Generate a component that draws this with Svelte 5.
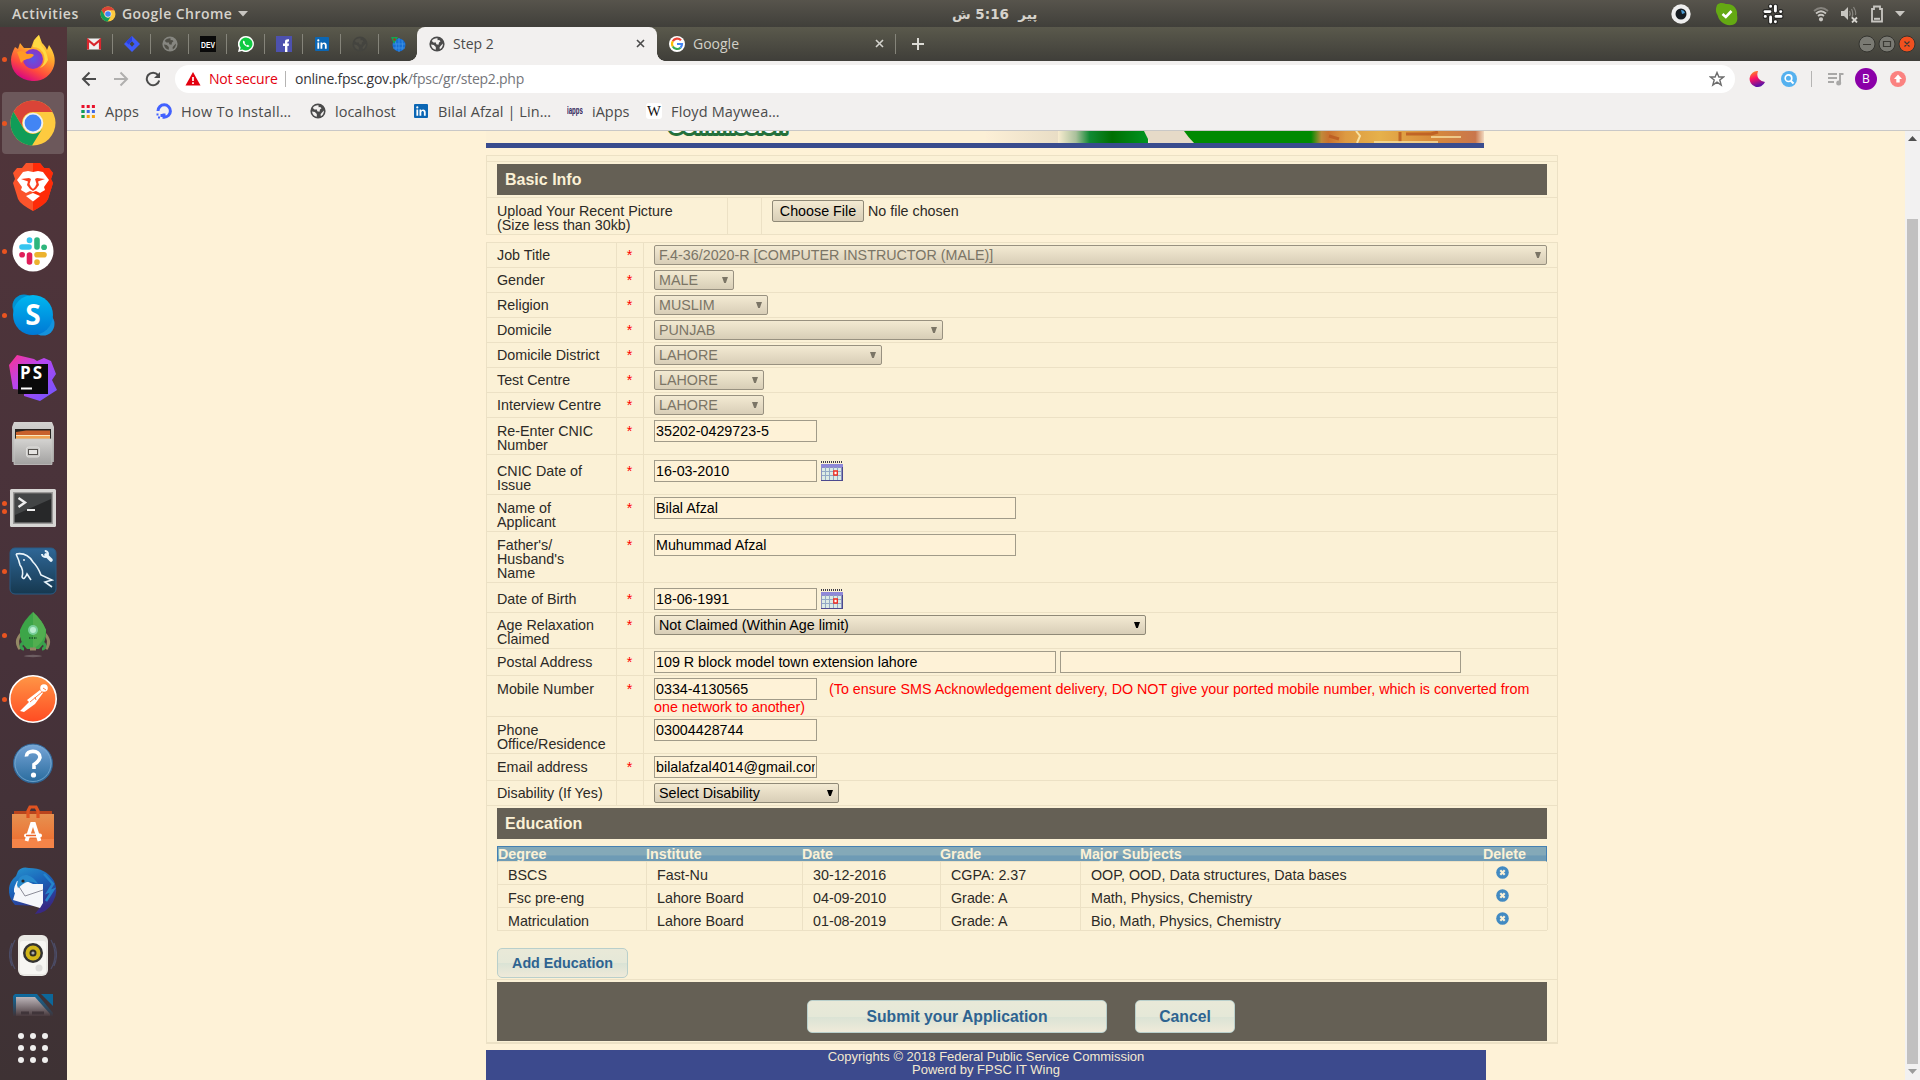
<script>
  const yes = true;
  const rows = [
    { label: ['Job Title'], req: yes, kind: 'select', value: 'F.4-36/2020-R [COMPUTER INSTRUCTOR (MALE)]', w: 893, off: true, h: 25 },
    { label: ['Gender'], req: yes, kind: 'select', value: 'MALE', w: 80, off: true, h: 25 },
    { label: ['Religion'], req: yes, kind: 'select', value: 'MUSLIM', w: 114, off: true, h: 25 },
    { label: ['Domicile'], req: yes, kind: 'select', value: 'PUNJAB', w: 289, off: true, h: 25 },
    { label: ['Domicile District'], req: yes, kind: 'select', value: 'LAHORE', w: 228, off: true, h: 25 },
    { label: ['Test Centre'], req: yes, kind: 'select', value: 'LAHORE', w: 110, off: true, h: 25 },
    { label: ['Interview Centre'], req: yes, kind: 'select', value: 'LAHORE', w: 110, off: true, h: 25 },
    { label: ['Re-Enter CNIC', 'Number'], req: yes, kind: 'input', value: '35202-0429723-5', w: 163, h: 37 },
    { label: ['CNIC Date of', 'Issue'], req: yes, kind: 'date', value: '16-03-2010', w: 163, h: 40 },
    { label: ['Name of', 'Applicant'], req: yes, kind: 'input', value: 'Bilal Afzal', w: 362, h: 37 },
    { label: ["Father's/", "Husband's", 'Name'], req: yes, kind: 'input', value: 'Muhummad Afzal', w: 362, h: 51 },
    { label: ['Date of Birth'], req: yes, kind: 'date', value: '18-06-1991', w: 163, h: 30 },
    { label: ['Age Relaxation', 'Claimed'], req: yes, kind: 'select', value: 'Not Claimed (Within Age limit)', w: 492, h: 36 },
    { label: ['Postal Address'], req: yes, kind: 'input', value: '109 R block model town extension lahore', w: 402, extra: 401, h: 27 },
    { label: ['Mobile Number'], req: yes, kind: 'input', value: '0334-4130565', w: 163, note: true, h: 41 },
    { label: ['Phone', 'Office/Residence'], req: false, kind: 'input', value: '03004428744', w: 163, h: 37 },
    { label: ['Email address'], req: yes, kind: 'input', value: 'bilalafzal4014@gmail.com', w: 163, h: 27 },
    { label: ['Disability (If Yes)'], req: false, kind: 'select', value: 'Select Disability', w: 185, h: 25 }
  ];
  const education = [
    ['BSCS', 'Fast-Nu', '30-12-2016', 'CGPA: 2.37', 'OOP, OOD, Data structures, Data bases'],
    ['Fsc pre-eng', 'Lahore Board', '04-09-2010', 'Grade: A', 'Math, Physics, Chemistry'],
    ['Matriculation', 'Lahore Board', '01-08-2019', 'Grade: A', 'Bio, Math, Physics, Chemistry']
  ];
  const dock = [
    ['firefox', 1], ['chrome', 1], ['brave', 0], ['slack', 1], ['skype', 1], ['phpstorm', 0], ['files', 0], ['terminal', 2],
    ['workbench', 1], ['rocket', 1], ['postman', 1], ['help', 0], ['software', 0], ['thunderbird', 0], ['rhythmbox', 0]
  ];
  const pinned = ['gmail', 'jira', 'globe', 'dev', 'whatsapp', 'facebook', 'linkedin', 'globedark', 'earth'];
</script>

{#snippet globe(color)}
  <svg width="16" height="16" viewBox="0 0 16 16"><circle cx="8" cy="8" r="7.6" fill={color} /><path d="M8.5 2.2C6 2 3.800 3 2.800 5L4.500 6.600H7L7.200 8.200L9.500 8.800L10 6.500L11.500 5.300L10.200 4L8.600 4.200zM2 8.500L4.800 9L6.800 11V13.800C4.500 13.500 2.300 11.500 2 8.500zM14 7.500C14 10.500 12.500 12.400 10.800 13.200L10.600 11.200L12 9.500z" fill="currentColor" /></svg>
{/snippet}

{#snippet linkedin()}
  <svg width="16" height="16" viewBox="0 0 16 16"><rect x="1" y="1" width="14" height="14" rx="1" fill="#0b66b4" /><path d="M3.400 6.500H5.200V12.800H3.400zM6.500 6.500H8.200V7.400C9.600 5.600 12.700 6.200 12.700 9.200V12.800H10.900V9.600C10.900 7.400 8.300 7.500 8.300 9.600V12.800H6.500z" fill="#fff" /><circle cx="4.300" cy="4.400" r="1.100" fill="#fff" /></svg>
{/snippet}

{#snippet chromeLogo(size)}
  <svg width={size} height={size} viewBox="0 0 48 48">
    <circle cx="24" cy="24" r="22.500" fill="#fdca3f" />
    <path d="M24 1.500A22.500 22.500 0 0 1 43.500 13H24A11 11 0 0 0 14.500 29.500L4.500 12.800A22.500 22.500 0 0 1 24 1.500z" fill="#da4437" />
    <path d="M4.500 12.800L14.500 29.500A11 11 0 0 0 33.500 29.500L23 46.500A22.500 22.500 0 0 1 4.500 12.800z" fill="#109d58" />
    <circle cx="24" cy="24" r="10.300" fill="#f1f1f1" /><circle cx="24" cy="24" r="8.400" fill="#4285f4" />
  </svg>
{/snippet}

<div class="desktop">
  <header class="topbar">
    <span class="act">Activities</span>
    {@render chromeLogo(16)}
    <span class="appname">Google Chrome</span>
    <svg class="caret" width="10" height="6" viewBox="0 0 10 6"><path d="M0 0H10L5 5.500z" fill="#c8c6c1" /></svg>
    <span class="clock" dir="rtl" lang="ur">پیر &nbsp;5:16 ش</span>
    <div class="tray">
      <svg width="22" height="22" viewBox="0 0 22 22"><circle cx="11" cy="11" r="9.700" fill="#eee" /><circle cx="11" cy="11" r="5.500" fill="#161c22" /><path d="M11 7A4 4 0 0 1 15 10L12 11z" fill="#4b9bd1" /></svg>
      <svg width="24" height="24" viewBox="0 0 24 24"><path d="M2 3C5 0 8 1 11 2C18 1 23 7 22 13C23 18 22 22 17 23C9 24 4 19 2.500 13C0 9 1 6 2 3z" fill="#64a913" /><path d="M7.500 12L10.800 15L16.500 9" fill="none" stroke="#fff" stroke-width="2.600" /></svg>
      <svg width="22" height="22" viewBox="0 0 22 22"><g stroke="#252523" stroke-width="5" stroke-linecap="round"><path d="M3 8.600H8M8.600 3.200V3.400M13.400 3.200V8M18.600 8.600H18.800M14 13.400H19M13.400 18.600V18.800M8.600 14V19M3.200 13.400H3.400" /></g><g stroke="#fff" stroke-width="2.900" stroke-linecap="round"><path d="M3 8.600H8M8.600 3.200V3.400M13.400 3.200V8M18.600 8.600H18.800M14 13.400H19M13.400 18.600V18.800M8.600 14V19M3.200 13.400H3.400" /></g></svg>
      <svg width="16" height="16" viewBox="0 0 16 16" fill="none" stroke="#c8c6c1" stroke-width="1.800"><path d="M1 5Q8 -1 15 5" opacity=".45" /><path d="M3 7.500Q8 3 13 7.500M5 10Q8 7.500 11 10" /><circle cx="8" cy="13.300" r="1.200" fill="#c8c6c1" /></svg>
      <svg width="18" height="18" viewBox="0 0 18 18"><path d="M1 6H4L8 2V15L4 11H1z" fill="#c8c6c1" /><path d="M9.500 6Q11 8.500 9.500 11M11.500 4Q14 8.500 11.500 13M13.500 2Q16.500 7 15.500 10" fill="none" stroke="#87857f" stroke-width="1.200" /><path d="M12 12.500L17 17.500M17 12.500L12 17.500" stroke="#d5d3ce" stroke-width="1.800" /></svg>
      <svg width="14" height="18" viewBox="0 0 14 18"><path d="M4 4V1.500H10V4H12V16.500H2V4z" fill="none" stroke="#c8c6c1" stroke-width="1.800" /><path d="M4 13.800H10" stroke="#c8c6c1" stroke-width="2" /></svg>
      <svg width="10" height="6" viewBox="0 0 10 6"><path d="M0 0H10L5 5.500z" fill="#c8c6c1" /></svg>
    </div>
  </header>

  <aside class="dock">
    {#each dock as [name, dots]}
      <div class="slot" class:current={name === 'chrome'}>
        <div class="dots">{#each Array(dots) as _}<i></i>{/each}</div>
        {#if name === 'chrome'}
          {@render chromeLogo(48)}
        {:else}
          <svg width="48" height="48" viewBox="0 0 48 48">
            {#if name === 'firefox'}
              <defs>
                <linearGradient id="ff" x1=".8" y1="0" x2=".3" y2="1"><stop offset="0" stop-color="#fff14a" /><stop offset=".4" stop-color="#ffa52c" /><stop offset=".72" stop-color="#ff4a3d" /><stop offset="1" stop-color="#d4008a" /></linearGradient>
                <radialGradient id="ffp"><stop offset="0" stop-color="#5a55e8" /><stop offset="1" stop-color="#8a35c4" /></radialGradient>
              </defs>
              <path d="M6 12L9 14L11 8L15 13L22 13L25 5L30 0L33 8C35 10 37 12 38 15L40 10C45 17 47 24 45 31C42 41 33 47 23 46C11 45 2 37 2 25C2 20 4 16 6 12z" fill="url(#ff)" />
              <circle cx="24" cy="24" r="10" fill="url(#ffp)" />
              <path d="M8 17Q14 14 18 19Q23 18 25 20Q22 24 18 24Q14 25 12 28Q10 22 8 17z" fill="#ff9a25" />
              <path d="M24 12Q32 12 35 20Q37 28 31 33Q36 31 39 25Q38 16 32 10Q30 6 30 0Q24 5 24 12z" fill="#ffd943" />
            {:else if name === 'brave'}
              <path d="M17 0H31L35 5H40L44 10L42 16L44 20L39 36Q37 41 24 48Q11 41 9 36L4 20L6 16L4 10L8 5H13z" fill="#fb542b" />
              <path d="M24 0H31L35 5H40L44 10L42 16L44 20L39 36Q37 41 24 48z" fill="#ff2000" opacity=".8" />
              <path d="M14 9L19 8L24 9L29 8L34 9L40 17L35 24L36 27L31 30L27 28L24 29L21 28L17 30L12 27L13 24L8 17z" fill="#fff" />
              <path d="M12 16L20 15L22 16L20.500 21L22 24L24 26L26 24L27.500 21L26 16L28 15L36 16L29 18.500L30 22L27 26L24 28L21 26L18 22L19 18.500z" fill="#fb3d1c" />
              <path d="M22.500 14H25.500V23L24 24.500L22.500 23z" fill="#fff" />
              <path d="M17 33L24 30L31 33L24 38.500z" fill="#fff" />
            {:else if name === 'slack'}
              <circle cx="24" cy="24" r="20.500" fill="#fff" />
              <g stroke-width="5.600" stroke-linecap="round">
                <path d="M13 20H20" stroke="#36c5f0" /><path d="M20.500 13V13.500" stroke="#36c5f0" /><path d="M28 13V20" stroke="#2eb67d" /><path d="M35 20.300H35.200" stroke="#2eb67d" /><path d="M28 27.800H35" stroke="#ecb22e" /><path d="M28 35V35.200" stroke="#ecb22e" /><path d="M20.500 28V35" stroke="#e01e5a" /><path d="M13 27.800H13.200" stroke="#e01e5a" />
              </g>
            {:else if name === 'skype'}
              <defs><linearGradient id="sk" x2="0" y2="1"><stop stop-color="#00b7f0" /><stop offset="1" stop-color="#0078d4" /></linearGradient></defs>
              <circle cx="15" cy="15" r="11.500" fill="#0091d0" /><circle cx="34" cy="33" r="11.500" fill="#1492dc" /><circle cx="24" cy="24" r="20" fill="url(#sk)" />
              <text x="24" y="34" text-anchor="middle" class="skype">S</text>
            {:else if name === 'phpstorm'}
              <defs><linearGradient id="ps" x2="1" y2="1"><stop stop-color="#ff318c" /><stop offset=".4" stop-color="#b845f0" /><stop offset="1" stop-color="#6b57ff" /></linearGradient></defs>
              <path d="M0 10L8 0L25 4L28 6L35 3L42 6L47 19L43 25L48 35L31 46L15 41V35L4 34z" fill="url(#ps)" /><rect x="9" y="9" width="30" height="30" fill="#090909" />
              <text x="11" y="24" textLength="22" class="ps">PS</text><path d="M12 33.500H23" stroke="#fff" stroke-width="2" />
            {:else if name === 'files'}
              <defs><linearGradient id="fi" x2="0" y2="1"><stop stop-color="#d4d3d1" /><stop offset="1" stop-color="#a2a1a0" /></linearGradient></defs>
              <path d="M5 3H43L45 8V43H3V8z" fill="url(#fi)" /><rect x="6" y="10" width="36" height="10" fill="#282522" /><path d="M7 13L17 11.500H41V20H7z" fill="#c8602c" /><path d="M7 16H41V20H7z" fill="#f0a354" /><path d="M7 16.500H41" stroke="#f9e5bd" stroke-width="1.200" />
              <path d="M5 20H43V45.500H5z" fill="url(#fi)" stroke="#c8c7c5" stroke-width=".8" /><rect x="17.500" y="28" width="13" height="10" rx="2" fill="#c9c8c6" stroke="#dedddb" /><rect x="19.500" y="30.500" width="9" height="5" fill="#e5e4e2" stroke="#55524f" />
            {:else if name === 'terminal'}
              <rect x="1" y="6" width="46" height="38" rx="1.500" fill="#d7d6d4" /><rect x="4" y="9" width="40" height="32" fill="#9a9998" /><rect x="5.500" y="10.500" width="37" height="29" fill="#272829" /><path d="M6 11H42V16L6 32z" fill="#434546" /><path d="M9.500 15L16 19.500L9.500 24" fill="none" stroke="#eee" stroke-width="2.400" /><path d="M18 27H26" stroke="#eee" stroke-width="2" />
            {:else if name === 'workbench'}
              <defs><linearGradient id="wb" x2="0" y2="1"><stop stop-color="#2f6797" /><stop offset="1" stop-color="#16384f" /></linearGradient></defs>
              <rect x="1" y="1" width="46" height="46" rx="5" fill="url(#wb)" stroke="#295b84" />
              <path d="M7 7Q18 5 24 15Q29 20 32 28L43 33L36 35L43 40M7 7Q10 13 11 18Q15 23 13 30Q15 34 18 27L22 33" fill="none" stroke="#eaf4fa" stroke-width="1.600" /><circle cx="15" cy="13" r=".9" fill="#fff" /><path d="M37 8L42 13" stroke="#e8f4fb" stroke-width="3.600" stroke-linecap="round" /><path d="M35.800 4A3 3 0 1 1 33 7" fill="none" stroke="#e8f4fb" stroke-width="2" />
            {:else if name === 'rocket'}
              <path d="M13 22Q5 30 11 38M35 22Q43 30 37 38" fill="none" stroke="#948965" stroke-width="3" /><path d="M24 1Q33 9 37 19Q38 31 30 38H18Q10 31 11 19Q15 9 24 1z" fill="#3ca548" /><path d="M24 1Q33 9 37 19Q36 31 24 38z" fill="#52ae50" /><circle cx="24" cy="19" r="5" fill="#78cf9a" /><circle cx="24" cy="19" r="3" fill="#b9edd0" /><path d="M20 27H28" stroke="#246631" stroke-width="2" stroke-dasharray="1.500 1" /><path d="M15 32A3 3 0 1 0 15 38M33 32A3 3 0 1 1 33 38" fill="none" stroke="#39a04d" stroke-width="3" /><path d="M21 38H27" stroke="#948965" stroke-width="3" /><ellipse cx="24" cy="45" rx="9" ry="1.200" fill="#6d5e62" />
            {:else if name === 'postman'}
              <defs><linearGradient id="pm" x2="0" y2="1"><stop stop-color="#ff9646" /><stop offset="1" stop-color="#ff4b22" /></linearGradient></defs>
              <circle cx="24" cy="24" r="23.200" fill="url(#pm)" stroke="#fff" stroke-width="1.600" /><circle cx="35" cy="13" r="3.800" fill="#fff" /><path d="M31 15L18 25L20 27L11 36L15 37L26 29L34 18z" fill="#fff" /><path d="M21 27L33 17M26 22L27 25M34 13L37 15" stroke="#ff7135" stroke-width=".9" />
            {:else if name === 'help'}
              <defs><linearGradient id="hp" x2="0" y2="1"><stop stop-color="#77a5d7" /><stop offset="1" stop-color="#286b9d" /></linearGradient></defs>
              <circle cx="24" cy="24.500" r="19.500" fill="url(#hp)" stroke="#2f6394" /><circle cx="24" cy="24.500" r="18" fill="none" stroke="#7aa9cf" stroke-width=".8" /><path d="M17.500 17.500C17 10.500 31 10.500 31 18.500Q30 22.500 25 25.500V30" fill="none" stroke="#fff" stroke-width="3.600" /><circle cx="24.500" cy="36" r="2.600" fill="#fff" />
            {:else if name === 'software'}
              <defs><linearGradient id="so" x2="0" y2="1"><stop stop-color="#e69150" /><stop offset="1" stop-color="#ef692b" /></linearGradient></defs>
              <path d="M5 8H43V12H5z" fill="#b9441d" /><path d="M3 11H45V45H3z" fill="url(#so)" /><path d="M19 15V8L21 4H27L29 8V15" fill="none" stroke="#df5321" stroke-width="3.200" /><path d="M3 36H45V45H3z" fill="#f58448" /><path d="M17.500 38L23 21H25L30.500 38" fill="none" stroke="#fff" stroke-width="3.800" /><path d="M17 32.500H31" stroke="#fff" stroke-width="4" stroke-linecap="round" /><path d="M17 32.500H27" stroke="#ee6528" stroke-width="1.500" />
            {:else if name === 'thunderbird'}
              <defs><linearGradient id="tb" x2=".4" y2="1"><stop stop-color="#2798d0" /><stop offset=".5" stop-color="#1a60b8" /><stop offset="1" stop-color="#382985" /></linearGradient></defs>
              <path d="M9 4Q13 -1 20 1Q37 1 45 14Q50 25 44 35Q38 46 26 47L32 39L6 38Q-1 30 0 21Q1 14 7 9z" fill="url(#tb)" /><path d="M8 14Q16 12 24 17L34 17L34 36L31 41L4 33L6 26Q3 24 8 14z" fill="#f5f6fa" /><path d="M9 18L16 29L34 23" fill="none" stroke="#8c8c98" stroke-width="1" /><path d="M8 18Q9 7 18 8Q25 10 29 17Q20 12 14 17L9 21z" fill="#2789cc" /><circle cx="14" cy="14" r="1.600" fill="#272425" /><path d="M35 7L44 17L39 25L44 23L37 34" fill="none" stroke="#2584cb" stroke-width="2.500" />
            {:else}
              <path d="M6 9Q-2 24 6 38M42 9Q50 24 42 38M3 12Q-2 24 3 35M45 12Q50 24 45 35" fill="none" stroke="#4b4c66" stroke-width="1.200" /><rect x="9" y="4" width="30" height="41" rx="6" fill="#e9e8e4" /><rect x="11" y="10" width="26" height="33" rx="3" fill="#f7f6f3" /><circle cx="24" cy="22" r="10" fill="#343332" /><circle cx="24" cy="22" r="7.500" fill="#d2b619" /><circle cx="24" cy="22" r="3.500" fill="#2f2d25" /><circle cx="24" cy="22" r="1.600" fill="#aaa" /><circle cx="30" cy="37" r="3.500" fill="#dedddb" />
            {/if}
          </svg>
        {/if}
      </div>
    {/each}
    <div class="libre">
      <svg width="40" height="22" viewBox="0 0 40 22"><defs><linearGradient id="lo" x2="0" y2="1"><stop stop-color="#bdb5b9" /><stop offset="1" stop-color="#483a3e" /></linearGradient><linearGradient id="lb" x2="0" y2="1"><stop stop-color="#0c6ca2" /><stop offset="1" stop-color="#3f3439" /></linearGradient></defs><path d="M0 22V2L2 0H24L40 19V22z" fill="url(#lb)" /><path d="M28 0H40V12z" fill="#0d6799" /><path d="M3 3H22L37 20V22H3z" fill="url(#lo)" /><path d="M8 19H16M19 19H31" stroke="#40353a" stroke-width="3" /></svg>
    </div>
    <div class="apps">{#each Array(9) as _}<i></i>{/each}</div>
  </aside>

  <div class="browser">
    <div class="tabs">
      {#each pinned as p}
        <div class="pin">
          {#if p === 'linkedin'}
            {@render linkedin()}
          {:else if p === 'globe'}
            <span class="gdim">{@render globe('#868680')}</span>
          {:else if p === 'globedark'}
            <span class="gdim">{@render globe('#44443f')}</span>
          {:else}
            <svg width="16" height="16" viewBox="0 0 16 16">
              {#if p === 'gmail'}<rect x="1" y="2.500" width="14" height="11" fill="#f1f1f1" /><path d="M2 13.500V4L8 9L14 4V13.500" fill="none" stroke="#d9262d" stroke-width="2.200" />
              {:else if p === 'jira'}<path d="M8 0L16 8L8 16L0 8z" fill="#3e5bfa" /><path d="M8 5.300L10.500 8L8 10.700L5.500 8z" fill="#45463f" /><path d="M8 0V5L4.500 8.500L2 6z" fill="#2a40dd" />
              {:else if p === 'dev'}<rect width="16" height="16" fill="#0a0a0a" /><text x="8" y="12" text-anchor="middle" textLength="14" lengthAdjust="spacingAndGlyphs" class="devtext">DEV</text>
              {:else if p === 'whatsapp'}<path d="M8 0A8 8 0 1 1 4 15L0 16L1 12A8 8 0 0 1 8 0z" fill="#fff" /><path d="M8 1.500A6.500 6.500 0 1 1 4.500 13.500L2 14L2.700 11.600A6.500 6.500 0 0 1 8 1.500z" fill="#10ca42" /><path d="M5.300 4.500Q4 7 7 9.500Q10 12 11.500 10L9.700 8.700L8.600 9.500L6.500 7L7.200 6z" fill="#fff" />
              {:else if p === 'facebook'}<rect width="16" height="16" fill="#4d51ae" /><path d="M9 16V10H7V7.500H9V5.500Q9 2.800 13 3.200V5.500Q11.400 5.300 11.400 6.500V7.500H13L12.700 10H11.400V16z" fill="#fff" />
              {:else}<circle cx="9" cy="9" r="6.500" fill="#176ed4" /><path d="M9 2V16M3 8H15M3 12H15M5 4Q7 9 6 14M12 4Q13 9 12 14" stroke="#4195e5" stroke-width=".8" fill="none" /><path d="M1 1H8L4 8z" fill="#12a650" /><circle cx="4.500" cy="3.500" r="1.200" fill="#a9341d" />{/if}
            </svg>
          {/if}
        </div>
      {/each}
      <div class="tab active">
        <span class="gtab">{@render globe('#4b4b4b')}</span><span class="title">Step 2</span>
        <svg width="9" height="9" viewBox="0 0 9 9"><path d="M1 1L8 8M8 1L1 8" stroke="#4b4b4b" stroke-width="1.600" /></svg>
      </div>
      <div class="tab">
        <svg width="16" height="16" viewBox="0 0 16 16"><circle cx="8" cy="8" r="8" fill="#fff" /><g fill="none" stroke-width="2.200"><path d="M12 4.200A5 5 0 0 0 3.800 5.300" stroke="#ea4335" /><path d="M3.800 5.300A5 5 0 0 0 3.800 10.500" stroke="#fbbc05" /><path d="M3.800 10.500A5 5 0 0 0 11.500 11.700" stroke="#34a853" /><path d="M11.500 11.700Q13 10.200 13 8H8" stroke="#4285f4" /></g></svg>
        <span class="title">Google</span>
        <svg width="9" height="9" viewBox="0 0 9 9"><path d="M1 1L8 8M8 1L1 8" stroke="#d4d3cd" stroke-width="1.600" /></svg>
      </div>
      <svg class="plus" width="12" height="12" viewBox="0 0 12 12"><path d="M6 0V12M0 6H12" stroke="#dcdbd5" stroke-width="2" /></svg>
      <div class="winbtns">
        <svg width="60" height="18" viewBox="0 0 60 18"><circle cx="10" cy="9" r="8" fill="#7a7a73" stroke="#34342f" /><circle cx="30" cy="9" r="8" fill="#7a7a73" stroke="#34342f" /><circle cx="50" cy="9" r="8" fill="#f0501f" stroke="#34342f" /><path d="M6 9.500H14M26.500 6.500H33.500V11.500H26.500zM47.500 6.500L52.500 11.500M52.500 6.500L47.500 11.500" fill="none" stroke="#3a3933" stroke-width="1.200" /></svg>
      </div>
    </div>

    <div class="toolbar">
      <svg width="16" height="16" viewBox="0 0 16 16"><path d="M15 8H2M8.500 1.500L2 8L8.500 14.500" fill="none" stroke="#4b4b4b" stroke-width="2" /></svg>
      <svg width="16" height="16" viewBox="0 0 16 16"><path d="M1 8H14M7.500 1.500L14 8L7.500 14.500" fill="none" stroke="#b0afae" stroke-width="2" /></svg>
      <svg width="16" height="16" viewBox="0 0 16 16"><path d="M13 4A6.300 6.300 0 1 0 14.200 9.500" fill="none" stroke="#4b4b4b" stroke-width="2" /><path d="M15 1V7H9z" fill="#4b4b4b" /></svg>
      <div class="omni">
        <svg width="16" height="14" viewBox="0 0 16 14"><path d="M8 0L15.500 13.500H.5z" fill="#e3000f" /><path d="M8 5V9M8 10.300V12" stroke="#fff" stroke-width="1.700" /></svg>
        <span class="notsec">Not secure</span><i class="vline"></i>
        <span class="url">online.fpsc.gov.pk<span>/fpsc/gr/step2.php</span></span>
        <svg class="star" width="16" height="16" viewBox="0 0 16 16"><path d="M8 1.500L9.900 6H14.600L10.800 9L12.200 14L8 11.200L3.800 14L5.200 9L1.400 6H6.100z" fill="none" stroke="#6c6c6c" stroke-width="1.400" /></svg>
      </div>
      <div class="ext">
        <svg width="16" height="16" viewBox="0 0 16 16"><defs><linearGradient id="mo" x2=".3" y2="1"><stop stop-color="#ff9a1c" /><stop offset=".5" stop-color="#ff1462" /><stop offset="1" stop-color="#5f12a5" /></linearGradient></defs><path d="M9 0Q6 9 16 11A8 8 0 1 1 9 0z" fill="url(#mo)" /></svg>
        <svg width="16" height="16" viewBox="0 0 16 16"><circle cx="8" cy="8" r="8" fill="#55b1ef" /><circle cx="7.500" cy="7.200" r="3.300" fill="none" stroke="#fff" stroke-width="1.600" /><path d="M10 10L12.500 12.500" stroke="#fff" stroke-width="2" /></svg>
        <i class="vline"></i>
        <svg width="17" height="14" viewBox="0 0 17 14"><path d="M1 2H10M1 6H10M1 10H7" stroke="#a9a8a7" stroke-width="2" /><path d="M13 11V2H16.500" fill="none" stroke="#a9a8a7" stroke-width="2" /><circle cx="11.700" cy="11" r="2.500" fill="#a9a8a7" /></svg>
        <b class="avatar">B</b>
        <svg width="16" height="16" viewBox="0 0 16 16"><circle cx="8" cy="8" r="8" fill="#fb8280" /><path d="M8 3.500L12 8H9.700V11.500H6.300V8H4z" fill="#fff" /></svg>
      </div>
    </div>

    <div class="bookmarks">
      <span class="bm b1"><svg width="16" height="16" viewBox="0 0 16 16"><path d="M1.500 3.500H15" stroke="#e8102a" stroke-width="3" stroke-dasharray="3 2.200" /><path d="M1.500 8.500H15" stroke="#3f68e8" stroke-width="3" stroke-dasharray="3 2.200" /><path d="M1.500 13.500H15" stroke="#f5a30a" stroke-width="3" stroke-dasharray="3 2.200" /><path d="M1.500 7H4.500V10H1.500zM1.500 12H4.500V15H1.500z" fill="#11a050" /></svg><span>Apps</span></span>
      <span class="bm b2"><svg width="16" height="16" viewBox="0 0 16 16"><path d="M2 8A6.200 6.200 0 1 1 8 14.200V10.500" fill="none" stroke="#4261ff" stroke-width="3" /><path d="M4.500 11H7.500V14H4.500zM2 13.500H4V15.500H2zM.500 10.500H2.500V12.500H.5z" fill="#4261ff" /></svg><span>How To Install…</span></span>
      <span class="bm b3"><span class="gtab">{@render globe('#4b4b4b')}</span><span>localhost</span></span>
      <span class="bm b4">{@render linkedin()}<span>Bilal Afzal | Lin…</span></span>
      <span class="bm b5"><svg width="16" height="16" viewBox="0 0 16 16"><text x="0" y="11" textLength="16" lengthAdjust="spacingAndGlyphs" class="iapps">iapps</text></svg><span>iApps</span></span>
      <span class="bm b6"><svg width="16" height="16" viewBox="0 0 16 16"><rect width="16" height="16" rx="3" fill="#fff" /><text x="8" y="13" text-anchor="middle" textLength="14" lengthAdjust="spacingAndGlyphs" class="wiki">W</text></svg><span>Floyd Maywea…</span></span>
    </div>

    <div class="page">
      <main>
        <svg class="banner" width="998" height="17" viewBox="0 0 998 17">
          <defs>
            <linearGradient id="g1"><stop stop-color="#f8eccf" /><stop offset=".2" stop-color="#a9c09b" /><stop offset=".35" stop-color="#128a35" /><stop offset=".6" stop-color="#006f02" /><stop offset="1" stop-color="#009421" /></linearGradient>
            <linearGradient id="g2"><stop stop-color="#c08a3a" stop-opacity="0" /><stop offset=".06" stop-color="#c08a3a" /><stop offset=".1" stop-color="#c9722f" /><stop offset=".2" stop-color="#dd9a42" /><stop offset=".4" stop-color="#e6b14b" /><stop offset=".7" stop-color="#d78a3a" /><stop offset=".95" stop-color="#c9764c" /><stop offset="1" stop-color="#f1d9c0" /></linearGradient>
            <linearGradient id="g3"><stop stop-color="#fcefd6" /><stop offset="1" stop-color="#e7dcc4" /></linearGradient>
          </defs>
          <rect width="998" height="12" fill="#fcf0d6" /><rect x="500" width="80" height="12" fill="url(#g3)" /><rect x="572" width="90" height="12" fill="url(#g1)" />
          <path d="M658 0H698L708 12H664z" fill="#e6dac8" /><path d="M698 0H835V12H708Q702 6 698 0z" fill="#008a02" /><rect x="825" width="173" height="12" fill="url(#g2)" />
          <path d="M914 1V11M920 3L945 3L952 1M843 5L853 8" stroke="#b9591f" stroke-width="3" fill="none" opacity=".8" /><path d="M870 0L874 5L871 12" stroke="#f8e1a1" stroke-width="2" fill="none" /><path d="M888 11H952M945 6H975" stroke="#f8e1a1" stroke-width="1.500" />
          <text x="242" y="1.500" text-anchor="middle" textLength="118" lengthAdjust="spacingAndGlyphs" class="comm">Commission</text>
          <rect y="12" width="998" height="5" fill="#394c8e" />
        </svg>

        <section class="tbl first">
          <div class="sliver"></div>
          <div class="headrow"><h2>Basic Info</h2></div>
          <div class="upload">
            <div class="u1">Upload Your Recent Picture<br />(Size less than 30kb)</div><div class="u2"></div>
            <div class="u3"><button class="choose">Choose File</button><span>No file chosen</span></div>
          </div>
        </section>

        <section class="tbl">
          {#each rows as r}
            <div class="row {r.kind}" style:height="{r.h}px">
              <div class="c1">{#each r.label as line}<div>{line}</div>{/each}</div>
              <div class="c2">{#if r.req}*{/if}</div>
              <div class="c3">
                <div class="line">
                  {#if r.kind === 'select'}
                    <div class="sel" class:off={r.off} style:width="{r.w}px"><span>{r.value}</span><svg width="6" height="7" viewBox="0 0 6 7"><path d="M0 0H6L3.800 6H2.200z" fill="currentColor" /></svg></div>
                  {:else}
                    <div class="inp" style:width="{r.w}px"><span>{r.value}</span></div>
                  {/if}
                  {#if r.extra}<div class="inp" style:width="{r.extra}px"></div>{/if}
                  {#if r.kind === 'date'}
                    <svg class="cal" width="22" height="20" viewBox="0 0 22 20"><rect y="3" width="22" height="17" fill="#8c92c0" /><rect y="3" width="22" height="3.500" fill="#8f88d8" /><rect x="1" y="7" width="19" height="12" fill="#dcebe4" /><path d="M0 1H22" stroke="#3e3d4a" stroke-width="2" stroke-dasharray="1 1" /><path d="M4.500 6V19M8.500 6V19M12.500 6V19M16.500 6V19M1 10.500H20M1 14.500H20" stroke="#93a9c6" /><path d="M12.800 10H16.300V14H12.800z" fill="#fff" stroke="#ee2b1d" stroke-width="1.300" /><path d="M21.500 6V20M0 19.500H22" stroke="#4c4a8e" /></svg>
                  {/if}
                  {#if r.note}<span class="note">(To ensure SMS Acknowledgement delivery, DO NOT give your ported mobile number, which is converted from</span>{/if}
                </div>
                {#if r.note}<div class="note n2">one network to another)</div>{/if}
              </div>
            </div>
          {/each}

          <div class="edu">
            <h2>Education</h2>
            <div class="grid">
              <div class="er eh"><span>Degree</span><span>Institute</span><span>Date</span><span>Grade</span><span>Major Subjects</span><span>Delete</span></div>
              {#each education as e}
                <div class="er">{#each e as cell}<span>{cell}</span>{/each}<span class="del"><svg width="13" height="13" viewBox="0 0 13 13"><circle cx="6.500" cy="6.500" r="6.300" fill="#428ac2" /><path d="M4.300 4.300L8.700 8.700M8.700 4.300L4.300 8.700" stroke="#fbf1d6" stroke-width="2.200" /></svg></span></div>
              {/each}
            </div>
            <button class="jq add">Add Education</button>
          </div>
          <div class="actions"><div><button class="jq submit">Submit your Application</button><button class="jq cancel">Cancel</button></div></div>
        </section>

        <footer>Copyrights © 2018 Federal Public Service Commission<br />Powerd by FPSC IT Wing</footer>
      </main>
      <div class="scroll">
        <svg width="9" height="5" viewBox="0 0 9 5"><path d="M0 5H9L4.500 0z" fill="#505050" /></svg>
        <div class="thumb"></div>
        <svg width="9" height="5" viewBox="0 0 9 5"><path d="M0 0H9L4.500 5z" fill="#9b9b9b" /></svg>
      </div>
    </div>
  </div>
</div>

<style>
  :global(body) { margin: 0; overflow: hidden; }
  * { box-sizing: border-box; }
  svg { flex: none; display: block; }
  .desktop { width: 1920px; height: 1080px; overflow: hidden; display: grid; grid-template: 27px 1fr / 67px 1fr; background: #fef2d7; }
  .topbar { grid-column: 1 / 3; display: grid; grid-template-columns: 88px 16px 124px 10px 1fr 260px; align-items: center; padding-left: 12px; background: linear-gradient(#57544c, #403f3a); color: #d6d3cc; font: 600 14px "Open Sans", sans-serif; white-space: nowrap; }
  .act { letter-spacing: .55px; }
  .appname { padding-left: 6px; letter-spacing: .45px; }
  .caret { margin-left: -2px; }
  .clock { justify-self: start; margin-left: 702px; font: bold 13.500px "DejaVu Sans", sans-serif; letter-spacing: -1.300px; }
  .tray { display: flex; align-items: center; padding-left: 10px; }
  .tray svg:nth-child(2) { margin-left: 23px; }
  .tray svg:nth-child(3) { margin-left: 23px; }
  .tray svg:nth-child(4) { margin-left: 29px; }
  .tray svg:nth-child(5) { margin-left: 11px; }
  .tray svg:nth-child(6) { margin-left: 12px; }
  .tray svg:nth-child(7) { margin-left: 11px; }

  .dock { background: linear-gradient(#51353a, #47323a 60%, #3e3234); display: flex; flex-direction: column; overflow: hidden; }
  .slot { height: 64px; flex: none; display: flex; align-items: center; position: relative; }
  .slot.current::before { content: ""; position: absolute; left: 2px; top: 1px; width: 62px; height: 62px; border-radius: 4px; background: #6c585b; }
  .slot > * { position: relative; }
  .dots { width: 9px; display: flex; flex-direction: column; gap: 3px; padding-left: 2px; }
  .dots i { width: 5px; height: 5px; border-radius: 50%; background: #e95420; }
  .libre { padding: 7px 0 0 13px; height: 45px; flex: none; }
  .apps { display: grid; grid-template-columns: repeat(3, 6px); gap: 6px; padding: 1px 0 0 18px; }
  .apps i { width: 6px; height: 6px; border-radius: 50%; background: #f0efee; }
  .skype { font: bold 28px "Open Sans", sans-serif; fill: #fff; }
  .ps { font: bold 17px "Open Sans", sans-serif; fill: #fff; }

  .browser { display: grid; grid-template-rows: 34px 35px 35px 1fr; min-width: 0; background: #f2f0ef; }
  .tabs { display: flex; align-items: center; background: linear-gradient(#5a594c, #3f3e39); padding-left: 8px; }
  .pin { width: 38px; height: 20px; border-right: 1px solid #85847a; display: flex; align-items: center; justify-content: center; }
  .pin:nth-child(9) { border: 0; }
  .gdim { color: #504f47; }
  .gtab { color: #f2f0ef; }
  .devtext { font: bold 9px "Liberation Sans", sans-serif; fill: #fff; }
  .tab { width: 239px; height: 34px; display: flex; align-items: center; padding: 0 12px 1px; gap: 8px; color: #d2d0c8; font: 14px "Open Sans", sans-serif; position: relative; }
  .tab.active { width: 240px; background: #f2f0ef; color: #4b4b4b; border-radius: 8px 8px 0 0; }
  .tab.active::before, .tab.active::after { content: ""; position: absolute; bottom: 0; width: 8px; height: 8px; }
  .tab.active::before { left: -8px; background: radial-gradient(circle at 0 0, transparent 7.5px, #f2f0ef 8px); }
  .tab.active::after { right: -8px; background: radial-gradient(circle at 100% 0, transparent 7.5px, #f2f0ef 8px); }
  .tab:not(.active)::after { content: ""; position: absolute; right: 0; top: 7px; height: 20px; border-right: 1px solid #85847a; }
  .title { flex: 1; }
  .plus { margin-left: 16px; }
  .winbtns { margin-left: auto; padding-right: 3px; }
  .toolbar { display: flex; align-items: center; padding-left: 14px; }
  .toolbar > svg + svg { margin-left: 16px; }
  .omni { width: 1560px; height: 28px; margin-left: 14px; border-radius: 14px; background: #fff; display: flex; align-items: center; padding: 0 10px; font: 14px "Open Sans", sans-serif; color: #35363a; white-space: nowrap; }
  .notsec { color: #e3000f; margin-left: 8px; width: 76px; letter-spacing: -.25px; }
  .vline { width: 1px; height: 16px; background: #b5b4b3; }
  .url { margin-left: 9px; letter-spacing: -.25px; }
  .url span { color: #74757a; }
  .star { margin-left: auto; }
  .ext { display: flex; align-items: center; margin-left: 14px; }
  .ext > :nth-child(2) { margin-left: 16px; }
  .ext > :nth-child(3) { margin-left: 14px; }
  .ext > :nth-child(4) { margin-left: 15px; }
  .avatar { width: 22px; height: 22px; border-radius: 50%; background: #8b00a8; color: #fff; margin: 0 13px 0 11px; font: 12px/22px "Open Sans", sans-serif; text-align: center; }
  .bookmarks { display: flex; align-items: center; border-bottom: 1px solid #c9c8c7; padding: 0 0 4px 13px; font: 14.500px "Open Sans", sans-serif; color: #4b4b4b; white-space: nowrap; }
  .bm { display: flex; align-items: center; gap: 9px; }
  .b1 { width: 76px; } .b2 { width: 154px; letter-spacing: .25px; } .b3 { width: 103px; } .b4 { width: 154px; letter-spacing: .08px; } .b5 { width: 79px; } .b6 { letter-spacing: .15px; }
  .iapps { font: bold 11px "Liberation Sans", sans-serif; fill: #31265b; }
  .wiki { font: 14px "Liberation Serif", serif; fill: #111; }

  .page { display: grid; grid-template-columns: 1fr 15px; background: #fef2d7; overflow: hidden; min-height: 0; font: 14.300px/14px "Liberation Sans", sans-serif; color: #2c2a26; }
  main { padding-left: 419px; }
  .comm { font: bold 21px "Liberation Sans", sans-serif; fill: #fff; stroke: #25703a; stroke-width: 6px; paint-order: stroke; stroke-linejoin: round; }
  .tbl { width: 1072px; border: 1px solid #ece1c5; background: #fbf1d6; margin-top: 7px; border-top: 0; }
  .sliver { height: 6px; border-top: 1px solid #ece1c5; }
  .headrow { height: 36px; border-top: 1px solid #ece1c5; padding: 2px 10px 0; }
  h2 { margin: 0; height: 31px; background: #656055; color: #fbf1d6; font: bold 16px/31px "Liberation Sans", sans-serif; padding-left: 8px; }
  .upload { height: 37px; display: grid; grid-template-columns: 241px 34px 1fr; border-top: 1px solid #ece1c5; }
  .u1 { padding: 6px 0 0 10px; }
  .u1, .u2 { border-right: 1px solid #ece1c5; }
  .u3 { display: flex; align-items: flex-start; padding: 2px 0 0 10px; gap: 4px; }
  .u3 span { padding-top: 4px; }
  .choose { width: 92px; height: 22px; padding: 0; border: 1px solid #8f8977; border-radius: 2px; background: linear-gradient(#f3ead2, #d8ceb7); font: 14.300px "Liberation Sans", sans-serif; color: #000; }
  .tbl + .tbl { margin-top: 7px; }
  .row { display: grid; grid-template-columns: 130px 27px 1fr; border-top: 1px solid #ece1c5; }
  .c1 { padding: 6px 0 0 10px; border-right: 1px solid #ece1c5; white-space: nowrap; }
  .c2 { padding: 6px 1px 0 0; text-align: center; border-right: 1px solid #ece1c5; color: #f00; }
  .c3 { padding: 2px 0 0 10px; }
  .select .c1, .select .c2 { padding-top: 5px; }
  .date .c1, .date .c2 { padding-top: 9px; }
  .date .c3 { padding-top: 5px; }
  .line { display: flex; align-items: flex-start; gap: 4px; }
  .sel { height: 20px; border: 1px solid #8f8977; border-radius: 2px; background: linear-gradient(#f3ead2, #d8ceb7); display: flex; align-items: center; justify-content: space-between; padding: 0 5px 0 4px; color: #000; white-space: nowrap; }
  .off { color: #7b7566; border-color: #989180; }
  .inp { height: 22px; border: 1px solid #a19b89; background: #fef2d7; color: #000; line-height: 20px; padding: 0 1px; white-space: nowrap; }
  .inp span { display: block; overflow: hidden; }
  .cal { margin-top: 1px; }
  .note { color: #f00; line-height: 22px; margin-left: 8px; white-space: nowrap; }
  .n2 { line-height: 14px; margin-left: 0; }
  .edu { height: 174px; border-top: 1px solid #ece1c5; padding: 2px 10px 0; }
  .grid { margin-top: 7px; }
  .er { height: 23px; display: grid; grid-template-columns: 149px 156px 138px 140px 403px 64px; border-bottom: 1px solid #ece1c5; border-left: 1px solid #ece1c5; }
  .er span { border-right: 1px solid #ece1c5; padding: 6px 0 0 10px; }
  .er .del { padding: 4px 0 0 12px; }
  .eh { height: 16px; border: 1px solid #4480b2; border-bottom-color: #ece1c5; background: linear-gradient(#84a9b8 55%, #6e9bb5 65%); color: #fbf1d6; font-weight: bold; }
  .eh span { border: 0; padding: 0; line-height: 15px; margin-left: -1px; }
  .eh span:first-child { margin-left: 0; }
  .jq { display: block; padding: 0; border: 1px solid #b9cfcb; border-radius: 5px; background: linear-gradient(#e9e9d8, #e5e8d8 50%, #dae3d5 51%, #efead9); color: #2e6390; font: bold 14.300px "Liberation Sans", sans-serif; }
  .add { width: 131px; height: 30px; margin-top: 17px; }
  .actions { height: 64px; border-top: 1px solid #ece1c5; border-bottom: 1px solid #ece1c5; padding: 2px 10px 1px; }
  .actions > div { background: #656055; height: 59px; display: flex; gap: 28px; padding: 18px 0 0 310px; }
  .actions .jq { font-size: 15.730px; height: 33px; }
  .submit { width: 300px; }
  .cancel { width: 100px; }
  footer { width: 1000px; height: 31px; margin-top: 6px; background: #3c4a8d; color: #f4e9d0; font: 13px/13px "Liberation Sans", sans-serif; text-align: center; }
  .scroll { background: #f2f1f1; display: flex; flex-direction: column; align-items: center; padding: 5px 0 4px; }
  .thumb { width: 11px; height: 845px; margin: 78px 0 5px; background: #c1c0c0; flex: none; }
</style>
